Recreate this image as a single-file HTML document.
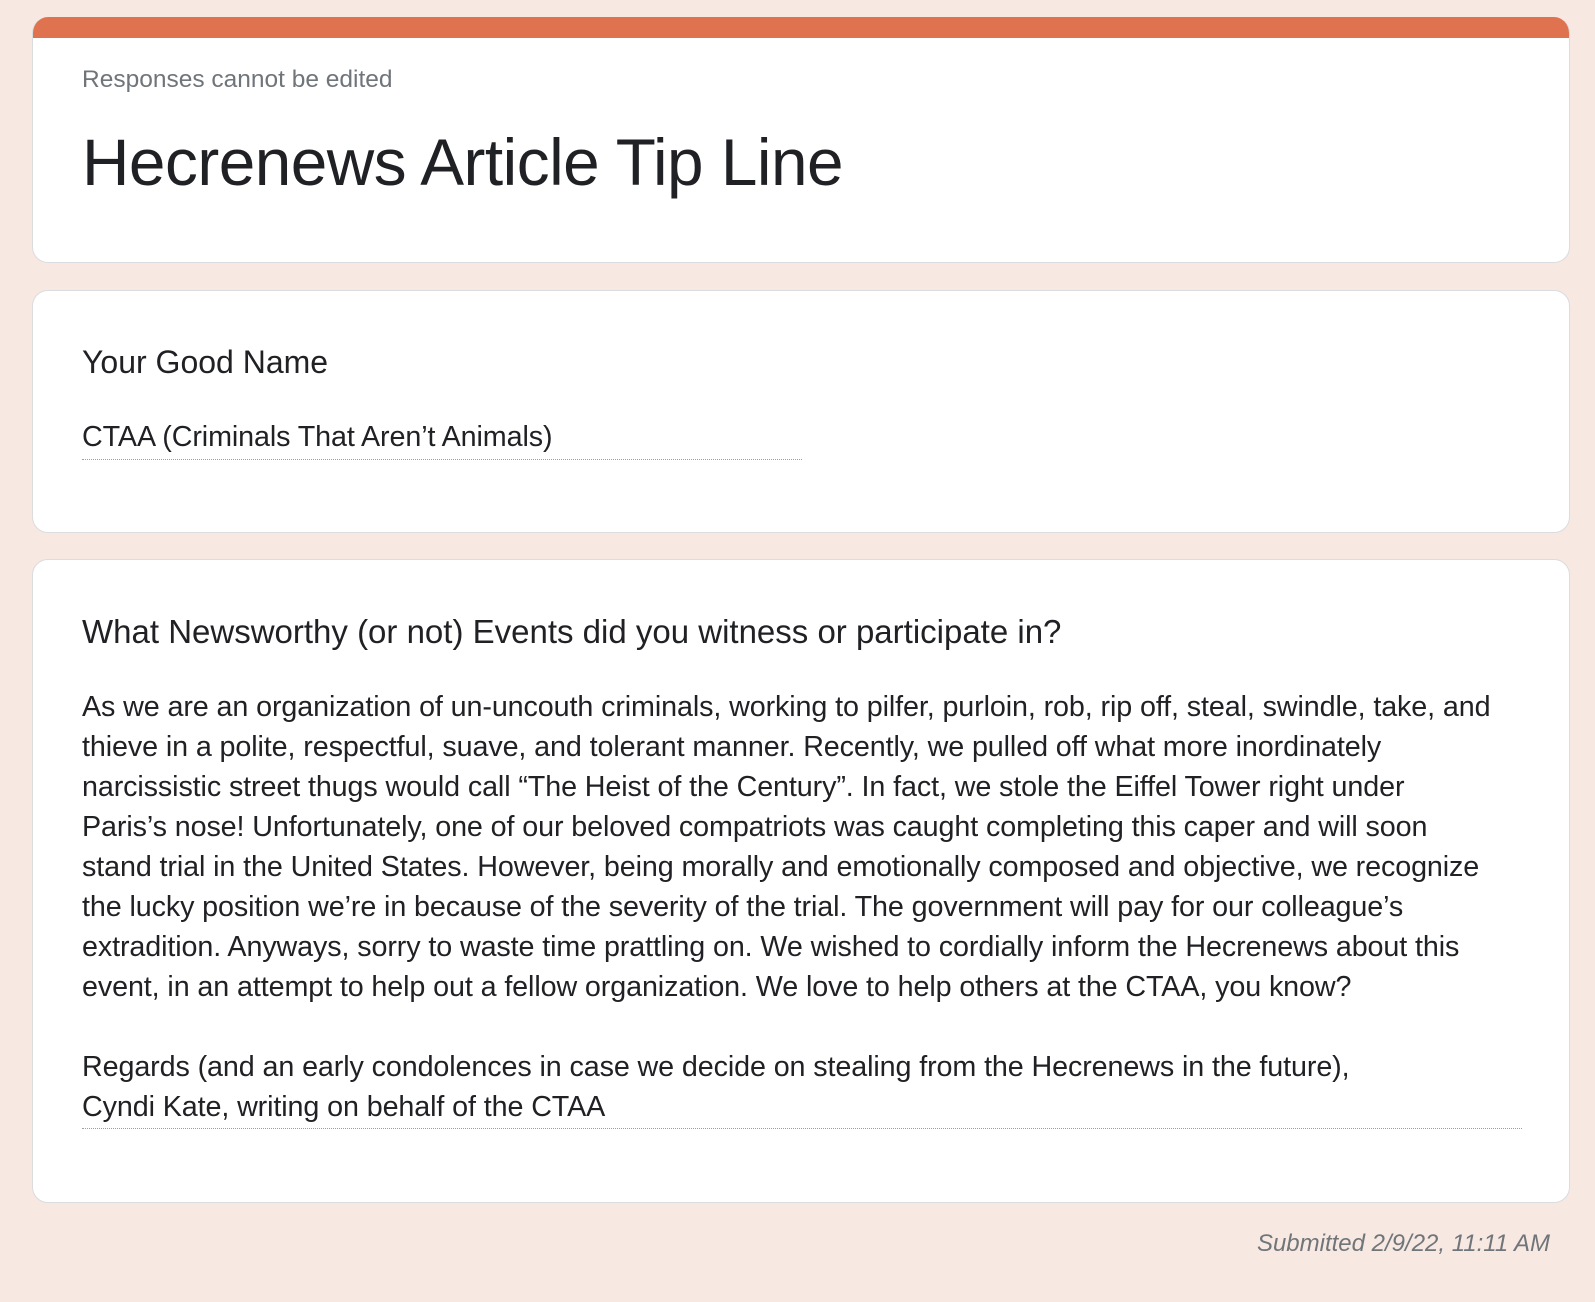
<!DOCTYPE html>
<html><head><meta charset="utf-8"><style>
body{margin:0;background:#f7e8e1;width:1595px;height:1302px;position:relative;font-family:"Liberation Sans",Arial,sans-serif;color:#202124;overflow:hidden}
.card{position:absolute;left:32px;width:1538px;background:#fff;border:1px solid #dadce0;border-radius:16px;box-sizing:border-box;overflow:hidden}
.t{position:absolute;left:49px;white-space:nowrap}
.body{font-size:28.7px;line-height:40px;letter-spacing:-0.1px}
.dot{position:absolute;left:49px;border-top:1.5px dotted #9aa0a6;height:0}
</style></head><body>
<div class="card" style="top:17px;height:246px;border-top:none">
  <div style="position:absolute;left:0;top:0;right:0;height:21px;background:#e0734f"></div>
  <div class="t" style="top:48px;line-height:30px;font-size:24.5px;color:#70757a">Responses cannot be edited</div>
  <div class="t" style="top:106px;line-height:80px;font-size:65.7px;letter-spacing:-0.5px;color:#202124">Hecrenews Article Tip Line</div>
</div>
<div class="card" style="top:290px;height:243px">
  <div class="t" style="top:51px;line-height:40px;font-size:32px">Your Good Name</div>
  <div class="t body" style="top:126px">CTAA (Criminals That Aren’t Animals)</div>
  <div class="dot" style="top:168px;width:720px"></div>
</div>
<div class="card" style="top:559px;height:644px">
  <div class="t" style="top:52px;line-height:40px;font-size:33px">What Newsworthy (or not) Events did you witness or participate in?</div>
  <div class="t body" style="top:127px">As we are an organization of un-uncouth criminals, working to pilfer, purloin, rob, rip off, steal, swindle, take, and<br>thieve in a polite, respectful, suave, and tolerant manner. Recently, we pulled off what more inordinately<br>narcissistic street thugs would call “The Heist of the Century”. In fact, we stole the Eiffel Tower right under<br>Paris’s nose! Unfortunately, one of our beloved compatriots was caught completing this caper and will soon<br>stand trial in the United States. However, being morally and emotionally composed and objective, we recognize<br>the lucky position we’re in because of the severity of the trial. The government will pay for our colleague’s<br>extradition. Anyways, sorry to waste time prattling on. We wished to cordially inform the Hecrenews about this<br>event, in an attempt to help out a fellow organization. We love to help others at the CTAA, you know?<br><br>Regards (and an early condolences in case we decide on stealing from the Hecrenews in the future),<br>Cyndi Kate, writing on behalf of the CTAA</div>
  <div class="dot" style="top:568px;width:1440px"></div>
</div>
<div style="position:absolute;right:45px;top:1230px;font-size:24px;font-style:italic;color:#70757a;white-space:nowrap">Submitted 2/9/22, 11:11 AM</div>
</body></html>
